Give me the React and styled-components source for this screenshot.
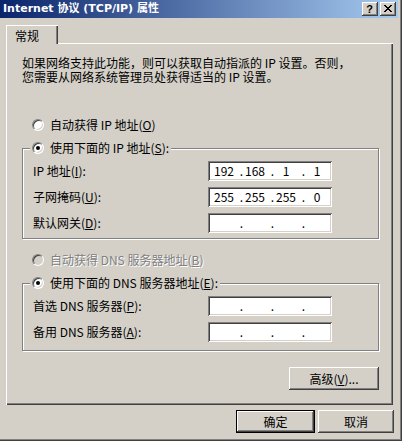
import React from 'react';
import styled, { createGlobalStyle } from 'styled-components';

const FACE = '#D4D0C8';
const SHADOW = '#808080';
const DARK = '#404040';
const HI = '#FFFFFF';
const FONT = `"Noto Sans CJK SC", "Noto Sans", sans-serif`;

const Global = createGlobalStyle`
  html, body { margin: 0; padding: 0; background: ${FACE}; }
  body { font-family: ${FONT}; font-size: 12px; color: #000; }
  * { box-sizing: border-box; }
`;

const Window = styled.div`
  width: 402px;
  height: 441px;
  background: ${FACE};
  padding: 0 4px 4px 0;
  box-shadow: inset -1px -1px 0 ${DARK}, inset -2px -2px 0 ${SHADOW};
  display: flex;
  flex-direction: column;
`;

const TitleBar = styled.div`
  height: 18px;
  flex: none;
  display: flex;
  align-items: center;
  justify-content: space-between;
  padding: 0 2px 0 3px;
  background: linear-gradient(to right, #0a246a, #a6caf0);
`;

const Title = styled.span`
  color: #fff;
  font-family: "DejaVu Sans", "Noto Sans CJK SC", sans-serif;
  font-weight: bold;
  font-size: 11px;
  line-height: 18px;
  white-space: nowrap;
`;

const CaptionButtons = styled.div`
  display: flex;
  gap: 2px;
`;

const raised = `
  background: ${FACE};
  box-shadow: inset -1px -1px 0 ${DARK}, inset 1px 1px 0 ${HI},
    inset -2px -2px 0 ${SHADOW}, inset 2px 2px 0 ${FACE};
`;

const CaptionButton = styled.div`
  width: 16px;
  height: 14px;
  ${raised}
  display: flex;
  align-items: center;
  justify-content: center;
  font-family: "Liberation Sans", sans-serif;
  font-weight: bold;
  font-size: 11px;
  line-height: 14px;
  padding: 0 1px 1px 0;
`;

const Body = styled.div`
  flex: 1;
  display: flex;
  flex-direction: column;
  padding: 7px 0 0 6px;
`;

const TabRow = styled.div`
  display: flex;
  height: 19px;
  width: 387px;
`;

const Tab = styled.div`
  width: 52px;
  height: 19px;
  padding: 3px 0 0 9px;
  line-height: 16px;
  box-shadow: inset 1px 1px 0 ${HI}, inset -1px 0 0 ${DARK}, inset -2px 0 0 ${SHADOW};
`;

const TabFill = styled.div`
  flex: 1;
  border-bottom: 1px solid ${HI};
`;

const Panel = styled.div`
  width: 387px;
  height: 361px;
  padding: 12px 0 0 16px;
  box-shadow: inset 1px 0 0 ${HI}, inset -1px -1px 0 ${DARK}, inset -2px -2px 0 ${SHADOW};
  display: flex;
  flex-direction: column;
`;

const Content = styled.div`
  width: 357px;
  display: flex;
  flex-direction: column;
`;

const Intro = styled.p`
  margin: 0;
  line-height: 14px;
  white-space: nowrap;
`;

const RadioRow = styled.div`
  height: 16px;
  display: flex;
  align-items: center;
  gap: 6px;
  margin-left: ${p => p.$indent || 0}px;
  margin-top: ${p => p.$top || 0}px;
  line-height: 16px;
  white-space: nowrap;
  color: ${p => (p.$disabled ? SHADOW : '#000')};
  text-shadow: ${p => (p.$disabled ? `1px 1px 0 ${HI}` : 'none')};
`;

const RadioCircle = styled.span`
  position: relative;
  flex: none;
  width: 12px;
  height: 12px;
  border-radius: 50%;
  border: 1px solid;
  border-color: ${SHADOW} ${HI} ${HI} ${SHADOW};
  background: ${p => (p.$disabled ? FACE : '#fff')};
  box-shadow: inset 1px 1px 0 ${DARK}, inset -1px -1px 0 ${FACE};
  &::after {
    content: '';
    display: ${p => (p.$checked ? 'block' : 'none')};
    position: absolute;
    left: 3px;
    top: 3px;
    width: 4px;
    height: 4px;
    border-radius: 50%;
    background: #000;
  }
`;

const Key = styled.span`
  text-decoration: underline;
`;

const GroupBox = styled.div`
  position: relative;
  width: 357px;
  margin-top: ${p => p.$top}px;
  border: 1px solid ${SHADOW};
  box-shadow: inset 1px 1px 0 ${HI}, 1px 1px 0 ${HI};
  padding: 12px 0 ${p => p.$bottom}px 10px;
  display: grid;
  grid-template-columns: 175px 124px;
  row-gap: 6px;
  align-items: center;
`;

const Legend = styled.div`
  position: absolute;
  top: -9px;
  left: 7px;
  padding: 0 2px;
  background: ${FACE};
`;

const Label = styled.span`
  line-height: 20px;
  white-space: nowrap;
`;

const IpField = styled.div`
  width: 124px;
  height: 20px;
  background: #fff;
  box-shadow: inset 1px 1px 0 ${SHADOW}, inset -1px -1px 0 ${HI},
    inset 2px 2px 0 ${DARK}, inset -2px -2px 0 ${FACE};
  display: flex;
  padding-left: 4px;
  line-height: 20px;
`;

const Segment = styled.div`
  display: flex;
  width: 31px;
`;

const Num = styled.span`
  width: 24px;
  text-align: center;
`;

const Dot = styled.span`
  width: 7px;
  text-align: right;
`;

const PushButton = styled.button`
  font-family: ${FONT};
  font-size: 12px;
  color: #000;
  height: 23px;
  width: ${p => p.$w}px;
  padding: 0;
  margin: 0;
  border: ${p => (p.$default ? '1px solid #000' : 'none')};
  ${raised}
  line-height: 20px;
  display: flex;
  align-items: center;
  justify-content: center;
  white-space: nowrap;
`;

const AdvancedWrap = styled.div`
  display: flex;
  justify-content: flex-end;
  margin-top: 16px;
`;

const Footer = styled.div`
  display: flex;
  justify-content: flex-end;
  gap: 3px;
  margin-top: 5px;
  padding-right: 4px;
`;

const CloseGlyph = () => (
  <svg width="8" height="7" viewBox="0 0 8 7" shapeRendering="crispEdges">
    <path
      fill="#000"
      d="M0 0h2v1H0zM6 0h2v1H6zM1 1h2v1H1zM5 1h2v1H5zM2 2h4v1H2zM3 3h2v1H3zM2 4h4v1H2zM1 5h2v1H1zM5 5h2v1H5zM0 6h2v1H0zM6 6h2v1H6z"
    />
  </svg>
);

const Radio = ({ checked, disabled, children, indent, top }) => (
  <RadioRow $indent={indent} $top={top} $disabled={disabled}>
    <RadioCircle $checked={checked} $disabled={disabled} />
    <span>{children}</span>
  </RadioRow>
);

const Ip = ({ parts }) => (
  <IpField>
    {parts.map((p, i) => (
      <Segment key={i}>
        <Num>{p}</Num>
        {i < 3 && <Dot>.</Dot>}
      </Segment>
    ))}
  </IpField>
);

const EMPTY = ['', '', '', ''];

export default function App() {
  return (
    <>
      <Global />
      <Window>
        <TitleBar>
          <Title>Internet 协议 (TCP/IP) 属性</Title>
          <CaptionButtons>
            <CaptionButton>?</CaptionButton>
            <CaptionButton>
              <CloseGlyph />
            </CaptionButton>
          </CaptionButtons>
        </TitleBar>
        <Body>
          <TabRow>
            <Tab>常规</Tab>
            <TabFill />
          </TabRow>
          <Panel>
            <Content>
              <Intro>
                如果网络支持此功能，则可以获取自动指派的 IP 设置。否则，
                <br />
                您需要从网络系统管理员处获得适当的 IP 设置。
              </Intro>
              <Radio indent={10} top={33}>
                自动获得 IP 地址(<Key>O</Key>)
              </Radio>
              <GroupBox $top={15} $bottom={5}>
                <Legend>
                  <Radio checked>
                    使用下面的 IP 地址(<Key>S</Key>):
                  </Radio>
                </Legend>
                <Label>
                  IP 地址(<Key>I</Key>):
                </Label>
                <Ip parts={['192', '168', '1', '1']} />
                <Label>
                  子网掩码(<Key>U</Key>):
                </Label>
                <Ip parts={['255', '255', '255', '0']} />
                <Label>
                  默认网关(<Key>D</Key>):
                </Label>
                <Ip parts={EMPTY} />
              </GroupBox>
              <Radio indent={10} top={13} disabled>
                自动获得 DNS 服务器地址(<Key>B</Key>)
              </Radio>
              <GroupBox $top={15} $bottom={8}>
                <Legend>
                  <Radio checked>
                    使用下面的 DNS 服务器地址(<Key>E</Key>):
                  </Radio>
                </Legend>
                <Label>
                  首选 DNS 服务器(<Key>P</Key>):
                </Label>
                <Ip parts={EMPTY} />
                <Label>
                  备用 DNS 服务器(<Key>A</Key>):
                </Label>
                <Ip parts={EMPTY} />
              </GroupBox>
              <AdvancedWrap>
                <PushButton $w={90}>
                  高级(<Key>V</Key>)...
                </PushButton>
              </AdvancedWrap>
            </Content>
          </Panel>
          <Footer>
            <PushButton $w={79} $default>
              确定
            </PushButton>
            <PushButton $w={76}>取消</PushButton>
          </Footer>
        </Body>
      </Window>
    </>
  );
}
